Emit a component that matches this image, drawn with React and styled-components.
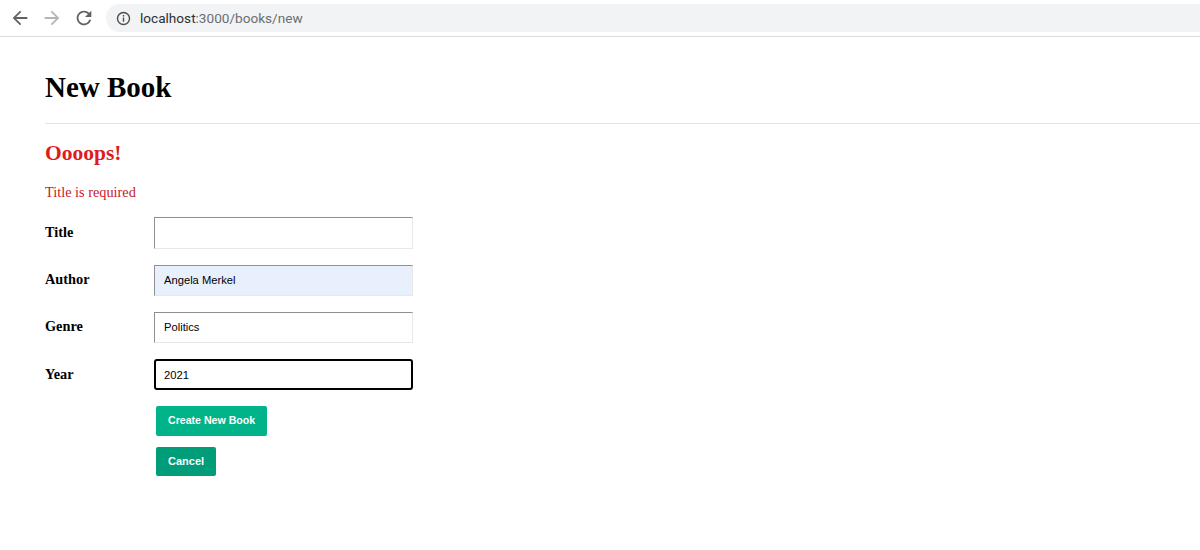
import React from 'react';
import styled, { createGlobalStyle } from 'styled-components';

const GlobalStyle = createGlobalStyle`
  html, body {
    margin: 0;
    padding: 0;
    background: #fff;
    overflow: hidden;
  }
`;

const Chrome = styled.div`
  height: 36px;
  display: flex;
  align-items: center;
  border-bottom: 1px solid #dcdcdc;
  padding: 0 0 0 9px;
`;

const NavIcon = styled.svg`
  width: 22px;
  height: 22px;
  margin-right: 10px;
  fill: ${(p) => p.color || '#5f6368'};
`;

const Omnibox = styled.div`
  flex: 1;
  height: 28px;
  margin-left: 1px;
  background: #f1f3f4;
  border-radius: 14px 0 0 14px;
  display: flex;
  align-items: center;
  padding-left: 10px;
  gap: 9px;
  font: 13.6px "Roboto", "Liberation Sans", sans-serif;
  color: #6b6e72;
`;

const InfoIcon = styled.svg`
  width: 15px;
  height: 15px;
  fill: none;
  stroke: #4a4d51;
  stroke-width: 1.4;
`;

const Host = styled.span`
  color: #2f3134;
`;

const Page = styled.main`
  padding: 0 0 0 45px;
  font-family: "Liberation Serif", "Times New Roman", serif;
`;

const Title = styled.h1`
  margin: 0;
  padding: 33px 0 18px;
  font-size: 29px;
  line-height: 35px;
  font-weight: bold;
  color: #000;
`;

const Divider = styled.hr`
  margin: 0;
  border: 0;
  border-top: 1px solid #e4e4e4;
`;

const ErrorTitle = styled.h2`
  margin: 16px 0 0;
  font-size: 21.5px;
  line-height: 26px;
  font-weight: bold;
  color: #e01b1b;
`;

const ErrorText = styled.p`
  margin: 18px 0 0;
  font-size: 14.3px;
  line-height: 17px;
  color: #c8202a;
`;

const Form = styled.form`
  margin-top: 16px;
  display: flex;
  flex-direction: column;
`;

const Row = styled.div`
  display: flex;
  align-items: center;
  margin-bottom: 16px;
`;

const Label = styled.label`
  width: 109px;
  padding-bottom: ${(p) => (p.$low ? '0' : '2px')};
  font-size: 14.3px;
  font-weight: bold;
  color: #000;
`;

const Input = styled.input`
  box-sizing: border-box;
  width: 259px;
  height: ${(p) => (p.$first ? '32px' : '31px')};
  padding: 0 9px 2px;
  border-style: solid;
  border-width: 1px;
  border-color: #8f8f8f #e8e8e8 #e8e8e8 #8f8f8f;
  border-radius: 0;
  background: ${(p) => (p.$autofilled ? '#e8f0fe' : '#fff')};
  font: 11.2px "Liberation Sans", Arial, sans-serif;
  color: #000;
  outline: none;

  ${(p) =>
    p.$focused &&
    `
    border: 2px solid #000;
    border-radius: 3px;
    padding: 0 8px;
  `}
`;

const Actions = styled.div`
  display: flex;
  flex-direction: column;
  align-items: flex-start;
  padding-left: 111px;
  gap: 11px;
`;

const Button = styled.button`
  box-sizing: border-box;
  height: ${(p) => (p.$cancel ? '29px' : '30px')};
  padding: 0 12px 2px;
  border: 0;
  border-radius: 2px;
  background: ${(p) => (p.$cancel ? '#019c78' : '#00b388')};
  color: #fff;
  font: bold ${(p) => (p.$cancel ? '11px' : '10.6px')} "Liberation Sans", Arial, sans-serif;
`;

export default function App() {
  return (
    <>
      <GlobalStyle />
      <Chrome>
        <NavIcon viewBox="0 0 24 24">
          <path d="M20 11H7.83l5.59-5.59L12 4l-8 8 8 8 1.41-1.41L7.83 13H20v-2z" />
        </NavIcon>
        <NavIcon viewBox="0 0 24 24" color="#b4b6b8">
          <path d="M12 4l-1.41 1.41L16.17 11H4v2h12.17l-5.58 5.59L12 20l8-8z" />
        </NavIcon>
        <NavIcon viewBox="0 0 24 24">
          <path d="M17.65 6.35A7.958 7.958 0 0 0 12 4c-4.42 0-7.99 3.58-7.99 8s3.57 8 7.99 8c3.73 0 6.84-2.55 7.73-6h-2.08A5.99 5.99 0 0 1 12 18c-3.31 0-6-2.69-6-6s2.69-6 6-6c1.66 0 3.14.69 4.22 1.78L13 11h7V4l-2.35 2.35z" />
        </NavIcon>
        <Omnibox>
          <InfoIcon viewBox="0 0 15 15">
            <circle cx="7.5" cy="7.5" r="6" />
            <path d="M7.5 6.5v4.2M7.5 4v1.5" />
          </InfoIcon>
          <span>
            <Host>localhost</Host>:3000/books/new
          </span>
        </Omnibox>
      </Chrome>
      <Page>
        <Title>New Book</Title>
        <Divider />
        <ErrorTitle>Oooops!</ErrorTitle>
        <ErrorText>Title is required</ErrorText>
        <Form>
          <Row>
            <Label>Title</Label>
            <Input $first defaultValue="" />
          </Row>
          <Row>
            <Label>Author</Label>
            <Input $autofilled defaultValue="Angela Merkel" />
          </Row>
          <Row>
            <Label>Genre</Label>
            <Input defaultValue="Politics" />
          </Row>
          <Row>
            <Label $low>Year</Label>
            <Input $focused defaultValue="2021" />
          </Row>
          <Actions>
            <Button type="button">Create New Book</Button>
            <Button type="button" $cancel>Cancel</Button>
          </Actions>
        </Form>
      </Page>
    </>
  );
}
